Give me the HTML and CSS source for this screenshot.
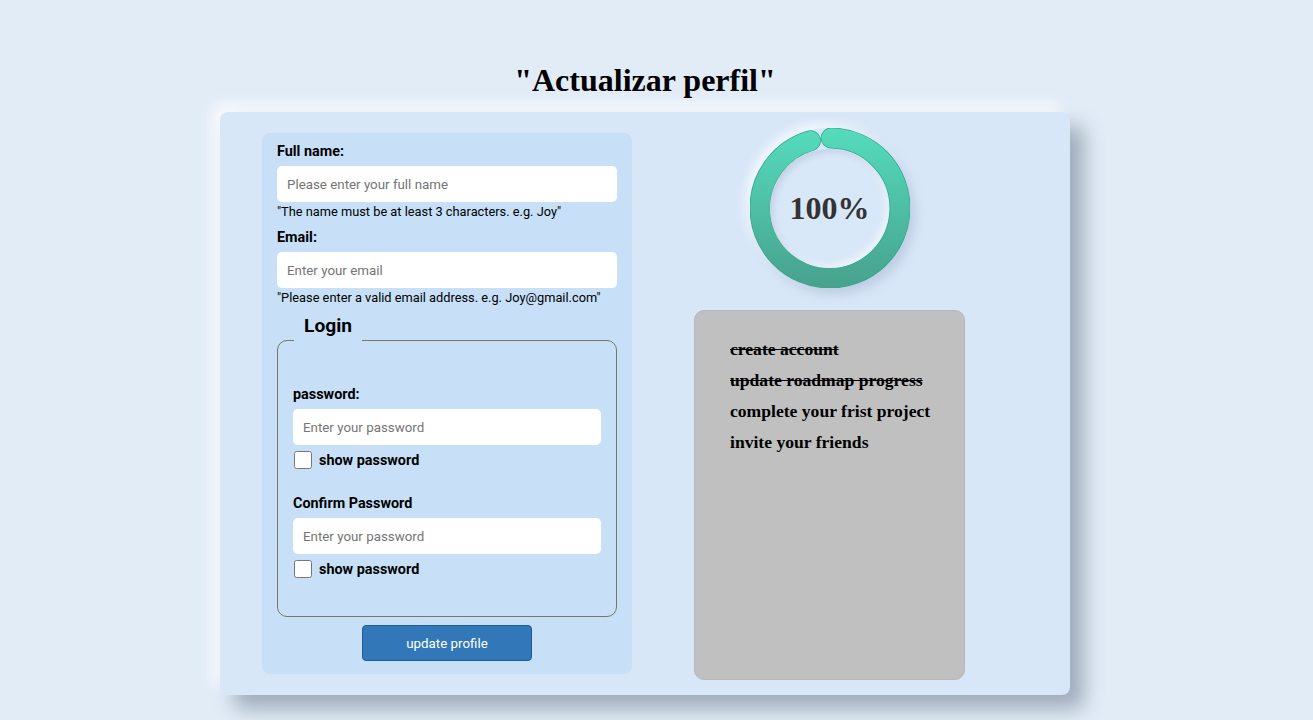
FILE: index.html
```html
<!DOCTYPE html>
<html lang="es">
<head>
<meta charset="utf-8">
<title>Actualizar perfil</title>
<link rel="stylesheet" href="styles.css">
</head>
<body>
<div class="page">
  <h1 class="title">"Actualizar perfil"</h1>
  <div class="card">
    <form class="form-panel">
      <label class="field-label" for="name">Full name:</label>
      <input class="text-input" id="name" type="text" placeholder="Please enter your full name">
      <p class="hint">"The name must be at least 3 characters. e.g. Joy"</p>

      <label class="field-label spaced" for="email">Email:</label>
      <input class="text-input" id="email" type="email" placeholder="Enter your email">
      <p class="hint">"Please enter a valid email address. e.g. Joy@gmail.com"</p>

      <fieldset class="login">
        <legend class="login-legend">Login</legend>
        <label class="field-label" for="pw">password:</label>
        <input class="text-input" id="pw" type="password" placeholder="Enter your password">
        <div class="check-row">
          <input class="check" type="checkbox" id="show1">
          <label class="check-label" for="show1">show password</label>
        </div>

        <label class="field-label confirm" for="pw2">Confirm Password</label>
        <input class="text-input" id="pw2" type="password" placeholder="Enter your password">
        <div class="check-row">
          <input class="check" type="checkbox" id="show2">
          <label class="check-label" for="show2">show password</label>
        </div>
      </fieldset>

      <div class="btn-row">
        <button class="update-btn" type="button">update profile</button>
      </div>
    </form>

    <div class="side">
      <div class="progress">
        <svg class="ring" width="160" height="160" viewBox="0 0 160 160">
          <defs>
            <linearGradient id="rg" gradientUnits="userSpaceOnUse" x1="80" y1="0" x2="80" y2="160" gradientTransform="rotate(89 80 80)">
              <stop offset="0" stop-color="#55dcbd"/>
              <stop offset="1" stop-color="#47a18d"/>
            </linearGradient>
          </defs>
          <circle cx="80" cy="80" r="70" fill="none" stroke="#2aa88a" stroke-width="21"
                  stroke-linecap="round" stroke-dasharray="418 22"
                  transform="rotate(-89 80 80)"/>
          <circle cx="80" cy="80" r="70" fill="none" stroke="url(#rg)" stroke-width="19.5"
                  stroke-linecap="round" stroke-dasharray="418 22"
                  transform="rotate(-89 80 80)"/>
        </svg>
        <div class="inner">100%</div>
      </div>

      <div class="tasks">
        <ul class="task-list">
          <li class="done">create account</li>
          <li class="done">update roadmap progress</li>
          <li>complete your frist project</li>
          <li>invite your friends</li>
        </ul>
      </div>
    </div>
  </div>
</div>
</body>
</html>
```

FILE: styles.css
```css
html, body {
  margin: 0;
  padding: 0;
  background: #e2ecf7;
}

body {
  font-family: Roboto, "Liberation Sans", Arial, sans-serif;
  overflow: hidden;
}

.page {
  width: 1290px;
  padding-top: 62px;
  padding-bottom: 25px;
}

.title {
  margin: 0 0 13px;
  text-align: center;
  font-family: "Liberation Serif", "Times New Roman", serif;
  font-weight: bold;
  font-size: 32px;
  line-height: 37px;
  color: #000;
}

.card {
  width: 850px;
  height: 583px;
  margin: 0 auto;
  box-sizing: border-box;
  background: #d8e7f8;
  border-radius: 8px;
  box-shadow: 14px 14px 20px rgba(80, 95, 115, 0.45), -8px -8px 14px rgba(255, 255, 255, 0.75);
  display: flex;
  align-items: flex-start;
  padding: 16px 0 0 42px;
}

/* ---------- form panel ---------- */
.form-panel {
  margin-top: 5px;
  width: 370px;
  box-sizing: border-box;
  background: #c7e0f8;
  border-radius: 8px;
  padding: 10px 15px 13px;
}

.field-label {
  display: block;
  font-size: 14.4px;
  font-weight: bold;
  line-height: 17px;
  color: #000;
  margin-bottom: 6px;
}

.field-label.spaced {
  margin-top: 9px;
}

.text-input {
  display: block;
  width: 100%;
  height: 36px;
  box-sizing: border-box;
  border: none;
  border-radius: 5px;
  background: #fff;
  padding: 0 10px;
  font-family: Roboto, "Liberation Sans", Arial, sans-serif;
  font-size: 13.333px;
  color: #000;
  outline: none;
}

.text-input::placeholder {
  color: #757575;
}

.hint {
  margin: 2px 0 0;
  font-size: 12.8px;
  line-height: 16px;
  color: #000;
}

.login {
  margin: 9px 0 0;
  padding: 21px 15px 38px;
  border: 1px solid #77766a;
  border-radius: 10px;
  min-width: 0;
}

.login-legend {
  font-size: 19.2px;
  font-weight: bold;
  line-height: 22px;
  padding: 0 10px 28px;
  margin-left: 1px;
  color: #000;
}

.check-row {
  display: flex;
  align-items: center;
  margin-top: 6px;
  height: 18px;
}

.check {
  width: 18px;
  height: 18px;
  margin: 0 7px 0 1px;
}

.check-label {
  font-size: 14.4px;
  font-weight: bold;
  color: #000;
}

.field-label.confirm {
  margin-top: 26px;
}

.btn-row {
  display: flex;
  justify-content: center;
  margin-top: 8px;
}

.update-btn {
  width: 170px;
  height: 36px;
  background: #3278b8;
  border: 1px solid #1b5e9e;
  border-radius: 4px;
  color: #fff;
  font-family: Roboto, "Liberation Sans", Arial, sans-serif;
  font-size: 13.333px;
  font-weight: 400;
}

/* ---------- side ---------- */
.side {
  width: 271px;
  margin-left: 62px;
  display: flex;
  flex-direction: column;
  align-items: center;
}

.progress {
  width: 160px;
  height: 160px;
  border-radius: 50%;
  display: grid;
  place-items: center;
  box-shadow: 5px 6px 12px rgba(90, 110, 140, 0.22), -5px -5px 10px rgba(255, 255, 255, 0.7);
}

.ring,
.inner {
  grid-area: 1 / 1;
}

.inner {
  width: 119px;
  height: 119px;
  border-radius: 50%;
  background: #d9e8f8;
  box-shadow: inset 3px 3px 6px rgba(90, 110, 140, 0.18), inset -3px -3px 6px rgba(255, 255, 255, 0.6);
  display: flex;
  align-items: center;
  justify-content: center;
  font-family: "Liberation Serif", "Times New Roman", serif;
  font-weight: bold;
  font-size: 32px;
  color: #333;
}

.tasks {
  margin-top: 22px;
  width: 271px;
  height: 370px;
  box-sizing: border-box;
  background: #c0c0c0;
  border: 1px solid #b8b8b8;
  border-radius: 10px;
  padding-top: 23px;
}

.task-list {
  list-style: none;
  margin: 0;
  padding: 0 0 0 35px;
}

.task-list li {
  font-family: "Liberation Serif", "Times New Roman", serif;
  font-weight: bold;
  font-size: 17.6px;
  line-height: 31px;
  color: #000;
}

.task-list li.done {
  text-decoration: line-through;
}
```
